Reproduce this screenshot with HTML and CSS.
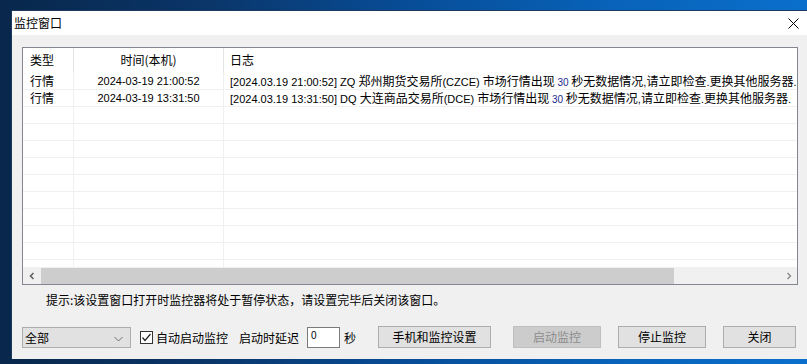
FILE: index.html
```html
<!DOCTYPE html>
<html lang="zh-CN">
<head>
<meta charset="utf-8">
<title>监控窗口</title>
<link rel="stylesheet" href="styles.css">
</head>
<body>
<div class="win">
  <div class="titlebar">
    <span class="title">监控窗口</span>
    <svg class="close" width="11" height="11" viewBox="0 0 11 11"><path d="M0.5 0.5 L10.5 10.5 M10.5 0.5 L0.5 10.5" stroke="#000" stroke-width="1" fill="none"/></svg>
  </div>
  <div class="client">
    <div class="list">
      <div class="grid">
        <div class="row hdr">
          <div class="c1">类型</div><div class="c2">时间(本机)</div><div class="c3">日志</div>
        </div>
        <div class="row">
          <div class="c1">行情</div><div class="c2 n">2024-03-19 21:00:52</div><div class="c3 log"><span class="n">[2024.03.19 21:00:52] ZQ </span>郑州期货交易所<span class="n">(CZCE) </span>市场行情出现 <span class="small">30</span> 秒无数据情况<span class="n">,</span>请立即检查<span class="n">.</span>更换其他服务器<span class="n">.</span></div>
        </div>
        <div class="row">
          <div class="c1">行情</div><div class="c2 n">2024-03-19 13:31:50</div><div class="c3 log"><span class="n">[2024.03.19 13:31:50] DQ </span>大连商品交易所<span class="n">(DCE) </span>市场行情出现 <span class="small">30</span> 秒无数据情况<span class="n">,</span>请立即检查<span class="n">.</span>更换其他服务器<span class="n">.</span></div>
        </div>
        <div class="row"><div class="c1"></div><div class="c2"></div><div class="c3"></div></div>
        <div class="row"><div class="c1"></div><div class="c2"></div><div class="c3"></div></div>
        <div class="row"><div class="c1"></div><div class="c2"></div><div class="c3"></div></div>
        <div class="row"><div class="c1"></div><div class="c2"></div><div class="c3"></div></div>
        <div class="row"><div class="c1"></div><div class="c2"></div><div class="c3"></div></div>
        <div class="row"><div class="c1"></div><div class="c2"></div><div class="c3"></div></div>
        <div class="row"><div class="c1"></div><div class="c2"></div><div class="c3"></div></div>
        <div class="row"><div class="c1"></div><div class="c2"></div><div class="c3"></div></div>
        <div class="row"><div class="c1"></div><div class="c2"></div><div class="c3"></div></div>
        <div class="row"><div class="c1"></div><div class="c2"></div><div class="c3"></div></div>
      </div>
      <div class="hscroll">
        <div class="sbtn left"><svg width="8" height="8" viewBox="0 0 8 8"><path d="M5.5 1 L2.5 4 L5.5 7" stroke="#606060" stroke-width="1.6" fill="none"/></svg></div>
        <div class="thumb"></div>
        <div class="sbtn right"><svg width="8" height="8" viewBox="0 0 8 8"><path d="M2.5 1 L5.5 4 L2.5 7" stroke="#8a8a8a" stroke-width="1.4" fill="none"/></svg></div>
      </div>
    </div>
    <div class="hint">提示:该设置窗口打开时监控器将处于暂停状态，请设置完毕后关闭该窗口。</div>
    <div class="controls">
      <div class="select">
        <span>全部</span>
        <svg class="arrow" width="9" height="6" viewBox="0 0 9 6"><path d="M0.5 1 L4.5 5 L8.5 1" stroke="#707070" stroke-width="1" fill="none"/></svg>
      </div>
      <label class="chk">
        <span class="box"><svg width="11" height="11" viewBox="0 0 11 11"><path d="M1.5 5.5 L4 8.5 L9.5 2" stroke="#202020" stroke-width="1.2" fill="none"/></svg></span>
        <span class="chk-text">自动启动监控</span>
      </label>
      <span class="delay">启动时延迟</span>
      <div class="input">0</div>
      <span class="sec">秒</span>
      <div class="btn b1">手机和监控设置</div>
      <div class="btn b2 disabled">启动监控</div>
      <div class="btn b3">停止监控</div>
      <div class="btn b4">关闭</div>
    </div>
  </div>
</div>
</body>
</html>
```
FILE: styles.css
```css
html, body {
  margin: 0;
  padding: 0;
}
body {
  width: 807px;
  height: 364px;
  overflow: hidden;
  box-sizing: border-box;
  padding: 10px 0 0 11px;
  background:
    linear-gradient(to right, #08274b 0%, #0a3568 25%, #074c96 50%, #0862b8 75%, #0a6fcc 100%);
  font-family: "Liberation Sans", "Noto Sans CJK SC", sans-serif;
  font-size: 12px;
  color: #000;
}
.win {
  width: 805px;
  border-top: 1px solid #1b3a5e;
  border-left: 1px solid #1b3a5e;
  background: #f0f0f0;
}
.titlebar {
  height: 24px;
  background: #fff;
  display: flex;
  align-items: center;
  padding-left: 2px;
  position: relative;
}
.title {
  font-family: "Noto Sans CJK SC", sans-serif;
  font-size: 12px;
  line-height: 16px;
}
.close {
  position: absolute;
  left: 776px;
  top: 7px;
}
.client {
  height: 324px;
  box-sizing: border-box;
  padding-top: 12px;
}
.list {
  margin-left: 10px;
  width: 776px;
  height: 238px;
  box-sizing: border-box;
  border: 1px solid #828790;
  background: #fff;
  display: flex;
  flex-direction: column;
}
.grid {
  height: 219px;
  overflow: hidden;
}
.row {
  display: flex;
  height: 16px;
  border-bottom: 1px solid #f0f0f0;
  line-height: 16px;
  white-space: nowrap;
}
.row .c1 {
  flex: none;
  border-right: 1px solid #f0f0f0;
  padding-left: 7px;
  width: 43px;
  font-family: "Noto Sans CJK SC", sans-serif;
}
.row .c2 {
  width: 149px;
  flex: none;
  border-right: 1px solid #f0f0f0;
  text-align: center;
}
.row .c3 {
  flex: 1;
  padding-left: 6px;
  overflow: hidden;
}
.row .c3.log {
  font-family: "Noto Sans CJK SC", sans-serif;
  font-size: 12px;
}
.row .c3.log .n {
  font-family: "Liberation Sans", sans-serif;
}
.row.hdr {
  height: 25px;
  line-height: 24px;
  border-bottom: none;
}
.row.hdr .c1, .row.hdr .c2 {
  border-right-color: #e5e5e5;
}
.row.hdr .c2 {
  font-family: "Noto Sans CJK SC", sans-serif;
}
.row.hdr .c3 {
  font-family: "Noto Sans CJK SC", sans-serif;
}
.n {
  font-size: 11px;
}
.small {
  font-family: "Liberation Sans", sans-serif;
  font-size: 10px;
  color: #1b2a8a;
}
.hscroll {
  height: 17px;
  background: #f0f0f0;
  display: flex;
}
.sbtn {
  width: 17px;
  height: 17px;
  display: flex;
  align-items: center;
  justify-content: center;
  flex: none;
}
.sbtn.left {
  background: #f0f0f0;
}
.thumb {
  margin: 1px 0 0 1px;
  width: 633px;
  height: 16px;
  background: #cdcdcd;
}
.sbtn.right {
  margin-left: auto;
}
.hint {
  margin-top: 7px;
  padding-left: 34px;
  line-height: 16px;
  font-family: "Noto Sans CJK SC", sans-serif;
  font-size: 12px;
}
.controls {
  margin-top: 18px;
  display: flex;
  align-items: flex-end;
  height: 22px;
  font-family: "Noto Sans CJK SC", sans-serif;
}
.select {
  margin-left: 10px;
  width: 109px;
  height: 21px;
  box-sizing: border-box;
  border: 1px solid #adadad;
  background: #e1e1e1;
  display: flex;
  align-items: center;
  padding-left: 2px;
  position: relative;
  line-height: 16px;
}
.select .arrow {
  position: absolute;
  left: 91px;
  top: 8px;
}
.chk {
  margin-left: 9px;
  width: 88px;
  height: 21px;
  display: flex;
  align-items: center;
}
.box {
  width: 13px;
  height: 13px;
  box-sizing: border-box;
  border: 1px solid #333;
  background: #fff;
  display: flex;
  align-items: center;
  justify-content: center;
  flex: none;
}
.chk-text {
  margin-left: 3px;
  line-height: 16px;
  white-space: nowrap;
}
.delay {
  margin-left: 11px;
  width: 60px;
  height: 21px;
  line-height: 21px;
  white-space: nowrap;
}
.input {
  margin-left: 8px;
  width: 33px;
  height: 21px;
  box-sizing: border-box;
  border: 1px solid #7a7a7a;
  background: #fff;
  font-family: "Liberation Sans", sans-serif;
  font-size: 10px;
  line-height: 12px;
  padding: 2px 0 0 3px;
}
.sec {
  margin-left: 4px;
  width: 12px;
  height: 21px;
  line-height: 21px;
}
.btn {
  height: 22px;
  box-sizing: border-box;
  border: 1px solid #adadad;
  background: #e1e1e1;
  display: flex;
  align-items: center;
  justify-content: center;
  line-height: 16px;
  white-space: nowrap;
}
.b1 { margin-left: 22px; width: 113px; }
.b2 { margin-left: 22px; width: 88px; }
.b3 { margin-left: 17px; width: 88px; }
.b4 { margin-left: 17px; width: 73px; }
.btn.disabled {
  background: #cccccc;
  border-color: #bfbfbf;
  color: #8d8d8d;
}
```
